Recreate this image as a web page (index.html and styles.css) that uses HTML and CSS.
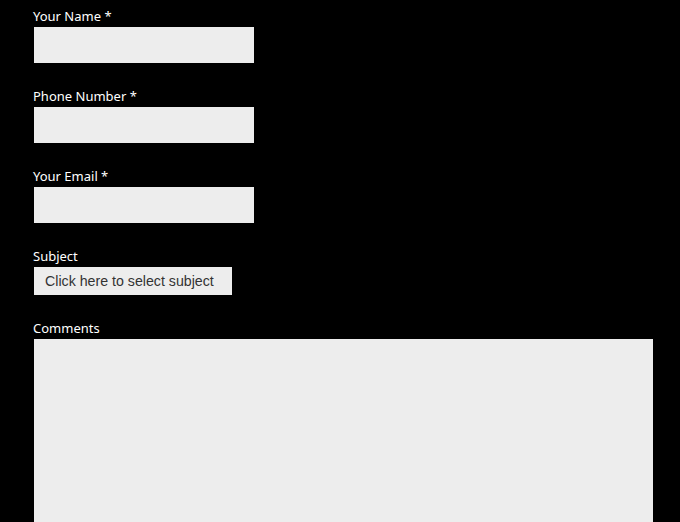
FILE: index.html
```html
<!DOCTYPE html>
<html lang="en">
<head>
    <meta charset="UTF-8">
    <meta name="viewport" content="width=device-width, initial-scale=1.0">
    <title>Contact</title>
    <link rel="stylesheet" href="styles.css">
</head>
<body>
    <form class="contact-form">
        <div class="field">
            <label for="name">Your Name *</label>
            <input type="text" id="name" class="text-input">
        </div>
        <div class="field">
            <label for="phone">Phone Number *</label>
            <input type="text" id="phone" class="text-input">
        </div>
        <div class="field">
            <label for="email">Your Email *</label>
            <input type="text" id="email" class="text-input">
        </div>
        <div class="field">
            <label for="subject">Subject</label>
            <div class="select-box" id="subject">Click here to select subject</div>
        </div>
        <div class="field">
            <label for="comments">Comments</label>
            <textarea id="comments" class="comments"></textarea>
        </div>
    </form>
</body>
</html>
```

FILE: styles.css
```css
body {
    margin: 0;
    background-color: #000;
    color: #fff;
    font-family: "Noto Sans", sans-serif;
    overflow: hidden;
}
.contact-form {
    padding: 6px 0 0 34px;
}
.field {
    display: flex;
    flex-direction: column;
    align-items: flex-start;
    margin-bottom: 23px;
}
.field:last-child {
    margin-bottom: 0;
}
.field label {
    font-size: 13px;
    line-height: 20px;
    margin-left: -1px;
    margin-bottom: 1px;
}
.text-input {
    width: 220px;
    height: 36px;
    box-sizing: border-box;
    border: none;
    background-color: #ededed;
    margin: 0;
}
.select-box {
    width: 198px;
    height: 28px;
    box-sizing: border-box;
    background-color: #ededed;
    color: #333;
    font-family: "Liberation Sans", Arial, sans-serif;
    font-size: 14.2px;
    line-height: 28px;
    padding-left: 11px;
}
.comments {
    display: block;
    width: 619px;
    height: 183px;
    box-sizing: border-box;
    border: none;
    background-color: #ededed;
    margin: 0;
    resize: none;
}
```
